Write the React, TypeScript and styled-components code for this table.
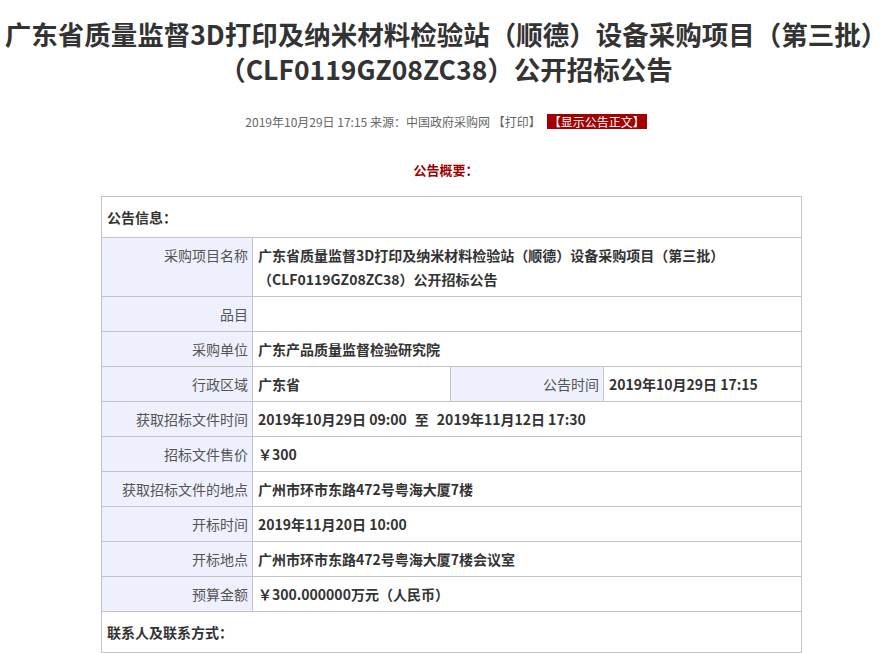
import React from "react";
import styled, { createGlobalStyle } from "styled-components";

const Global = createGlobalStyle`
  html, body { margin: 0; padding: 0; background: #fff; }
  body { font-family: "Noto Sans CJK SC", "Microsoft YaHei", sans-serif; color: #333; }
`;

const Page = styled.div`
  width: 892px;
  display: flex;
  flex-direction: column;
  align-items: stretch;
`;

const Title = styled.h1`
  margin: 0;
  padding-top: 16px;
  font-size: 26.5px;
  line-height: 35px;
  font-weight: 700;
  color: #333;
  text-align: center;
  white-space: nowrap;
`;

const Meta = styled.div`
  margin-top: 28px;
  font-size: 12px;
  line-height: 16px;
  color: #666;
  text-align: center;
`;

const ShowBtn = styled.span`
  display: inline-block;
  background: #a30000;
  color: #fff;
  line-height: 15px;
  padding: 0 2px;
  margin-left: 6px;
`;

const Summary = styled.div`
  margin-top: 32px;
  font-size: 13px;
  line-height: 16px;
  font-weight: 700;
  color: #a00000;
  text-align: center;
`;

const Table = styled.div`
  margin: 18px 0 0 101px;
  width: 700px;
  border-top: 1px solid #c4c4c4;
  border-left: 1px solid #c4c4c4;
  font-size: 14px;
`;

const Row = styled.div<{ $cols: string }>`
  display: grid;
  grid-template-columns: ${(p) => p.$cols};
`;

const Cell = styled.div<{ $h?: number }>`
  box-sizing: border-box;
  border-right: 1px solid #c4c4c4;
  border-bottom: 1px solid #c4c4c4;
  min-height: ${(p) => p.$h ?? 35}px;
  padding: 5px 6px;
  line-height: 24px;
`;

const Section = styled(Cell)`
  min-height: 41px;
  padding: 8px 5px;
  font-weight: 700;
  color: #333;
`;

const Label = styled(Cell)`
  background: #eef0fd;
  color: #555;
  text-align: right;
  padding-right: 4px;
`;

const Value = styled(Cell)`
  font-weight: 700;
  color: #333;
  padding-left: 5px;
`;

const Gap = styled.span`
  margin: 0 8px;
`;

const LV = "151px 1fr";

const rows: [string, React.ReactNode][] = [
  ["获取招标文件时间", <>2019年10月29日 09:00<Gap>至</Gap>2019年11月12日 17:30</>],
  ["招标文件售价", "￥300"],
  ["获取招标文件的地点", "广州市环市东路472号粤海大厦7楼"],
  ["开标时间", "2019年11月20日 10:00"],
  ["开标地点", "广州市环市东路472号粤海大厦7楼会议室"],
  ["预算金额", "￥300.000000万元（人民币）"],
];

export default function App() {
  return (
    <Page>
      <Global />
      <Title>
        广东省质量监督3D打印及纳米材料检验站（顺德）设备采购项目（第三批）
        <br />
        （CLF0119GZ08ZC38）公开招标公告
      </Title>
      <Meta>
        2019年10月29日 17:15 来源：中国政府采购网 【打印】
        <ShowBtn>【显示公告正文】</ShowBtn>
      </Meta>
      <Summary>公告概要：</Summary>
      <Table>
        <Row $cols="1fr">
          <Section>公告信息：</Section>
        </Row>
        <Row $cols={LV}>
          <Label $h={59}>采购项目名称</Label>
          <Value $h={59}>
            广东省质量监督3D打印及纳米材料检验站（顺德）设备采购项目（第三批）
            <br />
            （CLF0119GZ08ZC38）公开招标公告
          </Value>
        </Row>
        <Row $cols={LV}>
          <Label>品目</Label>
          <Value />
        </Row>
        <Row $cols={LV}>
          <Label>采购单位</Label>
          <Value>广东产品质量监督检验研究院</Value>
        </Row>
        <Row $cols="151px 198px 153px 1fr">
          <Label>行政区域</Label>
          <Value>广东省</Value>
          <Label>公告时间</Label>
          <Value>2019年10月29日 17:15</Value>
        </Row>
        {rows.map(([l, v]) => (
          <Row $cols={LV} key={l}>
            <Label>{l}</Label>
            <Value>{v}</Value>
          </Row>
        ))}
        <Row $cols="1fr">
          <Section>联系人及联系方式：</Section>
        </Row>
      </Table>
    </Page>
  );
}
